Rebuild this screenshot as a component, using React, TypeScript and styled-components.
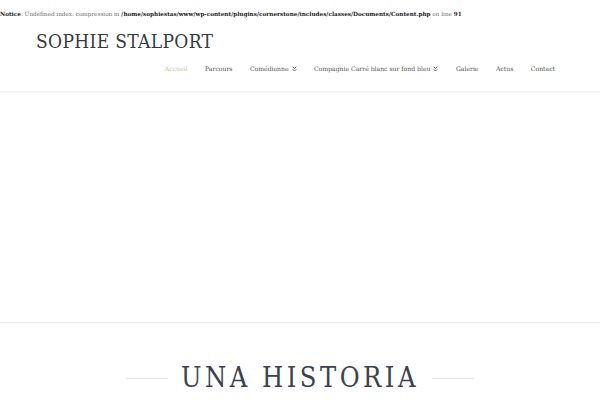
import * as React from "react";
import styled, { createGlobalStyle } from "styled-components";

const GlobalStyle = createGlobalStyle`
  html, body {
    margin: 0;
    padding: 0;
    background: #ffffff;
  }
  body {
    font-family: "DejaVu Serif", "Liberation Serif", serif;
    color: #555;
  }
`;

const Notice = styled.div`
  height: 28px;
  display: flex;
  align-items: center;
  font-size: 5.7px;
  color: #666;
  white-space: nowrap;
  b {
    color: #222;
  }
`;

const Masthead = styled.header`
  border-bottom: 1px solid #f2f2f2;
  box-shadow: 0 1px 1px rgba(0, 0, 0, 0.02);
`;

const Brand = styled.div`
  padding: 0 0 0 36px;
  height: 26px;
  font-family: "DejaVu Serif Condensed", "DejaVu Serif", serif;
  font-stretch: condensed;
  font-size: 19px;
  letter-spacing: 0.35px;
  color: #333a44;
  line-height: 26px;
`;

const Nav = styled.nav`
  display: flex;
  justify-content: flex-end;
  align-items: center;
  height: 37px;
  padding-right: 45px;
  gap: 17.5px;
`;

const NavItem = styled.a<{ $active?: boolean }>`
  font-size: 6.1px;
  color: ${({ $active }) => ($active ? "#c9c39a" : "#555")};
  text-decoration: none;
  display: flex;
  align-items: center;
  gap: 3px;
  padding-bottom: 8px;
`;

const Caret = styled.svg`
  width: 5px;
  height: 6px;
`;

const Slider = styled.div`
  height: 230px;
  border-bottom: 1px solid #eeeeee;
  box-shadow: 0 1px 2px rgba(0, 0, 0, 0.03);
`;

const Section = styled.section`
  padding-top: 37px;
  display: flex;
  justify-content: center;
  align-items: center;
  gap: 13px;
`;

const Rule = styled.span`
  width: 42px;
  height: 1px;
  background: #e6e6e6;
`;

const Heading = styled.h1`
  margin: 0;
  font-family: "DejaVu Serif Condensed", "DejaVu Serif", serif;
  font-stretch: condensed;
  font-weight: normal;
  font-size: 27px;
  letter-spacing: 3.5px;
  color: #3a4350;
  line-height: 36px;
`;

function DoubleCaret() {
  return (
    <Caret viewBox="0 0 10 12">
      <path
        d="M1.5 1.5 L5 5 L8.5 1.5 M1.5 6.5 L5 10 L8.5 6.5"
        fill="none"
        stroke="#555"
        strokeWidth="1.8"
      />
    </Caret>
  );
}

const items = [
  { label: "Accueil", active: true },
  { label: "Parcours" },
  { label: "Comédienne", sub: true },
  { label: "Compagnie Carré blanc sur fond bleu", sub: true },
  { label: "Galerie" },
  { label: "Actus" },
  { label: "Contact" },
];

export default function App() {
  return (
    <>
      <GlobalStyle />
      <Notice>
        <b>Notice</b>: Undefined index: compression in&nbsp;
        <b>/home/sophiestas/www/wp-content/plugins/cornerstone/includes/classes/Documents/Content.php</b>
        &nbsp;on line&nbsp;<b>91</b>
      </Notice>
      <Masthead>
        <Brand>SOPHIE STALPORT</Brand>
        <Nav>
          {items.map((item) => (
            <NavItem key={item.label} href="#" $active={item.active}>
              {item.label}
              {item.sub && <DoubleCaret />}
            </NavItem>
          ))}
        </Nav>
      </Masthead>
      <Slider />
      <Section>
        <Rule />
        <Heading>UNA HISTORIA</Heading>
        <Rule />
      </Section>
    </>
  );
}
